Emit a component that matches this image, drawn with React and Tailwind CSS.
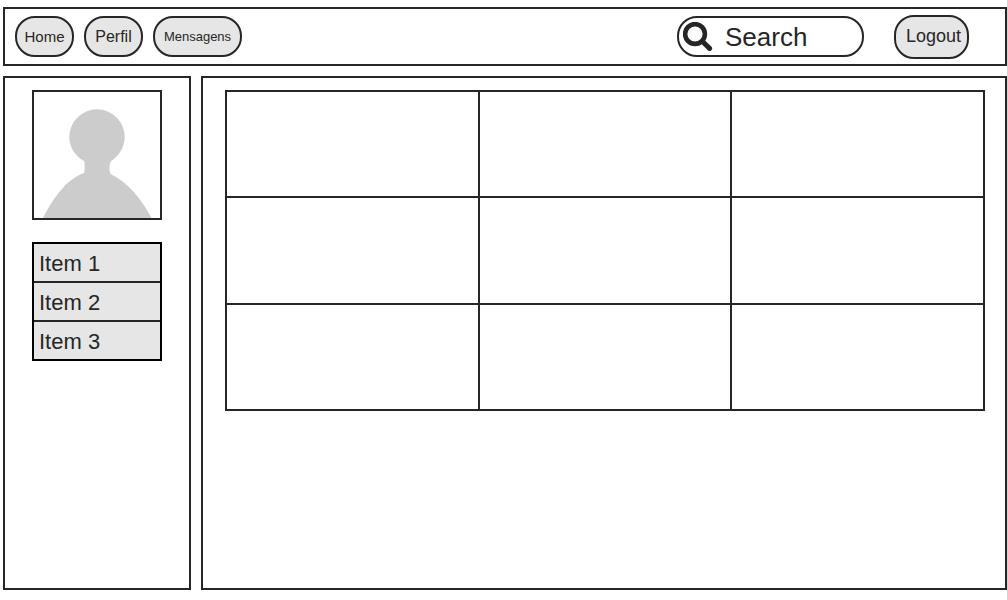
const navItems = [
  { label: "Home", className: "w-[59px] text-[15px]" },
  { label: "Perfil", className: "w-[59px] text-base" },
  { label: "Mensagens", className: "w-[89px] text-[13px]" },
];

const items = ["Item 1", "Item 2", "Item 3"];
const rowHeights = ["h-[106px]", "h-[107px]", "h-[106px]"];

function SearchIcon() {
  return (
    <svg viewBox="0 0 30 30" className="size-[30px] shrink-0" fill="none" stroke="#262626" aria-hidden="true">
      <circle cx="12" cy="12" r="9.9" strokeWidth="4.6" />
      <path d="M18.500 18.500 L21 21" strokeWidth="4.4" />
      <path d="M20.500 20.500 L26.600 26.400" strokeWidth="5" strokeLinecap="round" />
    </svg>
  );
}

function Avatar() {
  return (
    <svg viewBox="0 0 126 126" className="block w-full" role="img" aria-label="Avatar">
      <path
        fill="#cccccc"
        d="M9 126 C19 107 32 87 50 81 C51 77 51 73 50 69 C41 64 35.3 55 35.3 45 A27.7 27.7 0 0 1 90.7 45 C90.7 55 85 64 77 69 C75 73 75 77 76.500 82 C94 90 108 108 117.500 126 Z"
      />
    </svg>
  );
}

export default function App() {
  return (
    <div className="flex min-h-screen flex-col gap-[10px] bg-white pt-[7px] pb-[10px] pl-[3px] font-['Liberation_Sans',Arial,sans-serif] text-[#262626]">
      <header className="flex h-[59px] items-center justify-between border-2 border-[#262626] pr-9 pl-[10px]">
        <nav className="flex gap-[10px]">
          {navItems.map(({ label, className }) => (
            <button
              key={label}
              type="button"
              className={`h-[41px] rounded-[20px] border-2 border-[#262626] bg-[#e6e6e6] leading-6 ${className}`}
            >
              {label}
            </button>
          ))}
        </nav>
        <div className="flex items-center gap-[30px]">
          <label className="flex h-[41px] w-[187px] items-center gap-3 rounded-[20px] border-2 border-[#262626] bg-white pr-4 pl-1">
            <SearchIcon />
            <input
              type="text"
              aria-label="Search"
              placeholder="Search"
              className="w-full min-w-0 bg-transparent text-[26px] leading-8 outline-none placeholder:text-[#262626]"
            />
          </label>
          <button
            type="button"
            className="h-11 w-[75px] rounded-[20px] border-2 border-[#262626] bg-[#e6e6e6] pb-0.5 pl-1 text-lg"
          >
            Logout
          </button>
        </div>
      </header>

      <div className="flex grow gap-[10px]">
        <aside className="flex w-[188px] shrink-0 flex-col gap-[22px] border-2 border-[#262626] px-[27px] pt-3">
          <div className="w-[130px] border-2 border-[#262626]">
            <Avatar />
          </div>
          <ul className="w-[130px] divide-y-2 divide-[#262626] border-2 border-black bg-[#e6e6e6] text-[22px]">
            {items.map((item) => (
              <li key={item} className="box-content flex h-[36px] items-center pt-px pl-[5px]">
                {item}
              </li>
            ))}
          </ul>
        </aside>

        <main className="grow border-2 border-[#262626] pt-3 pr-5 pb-5 pl-[22px]">
          <table className="w-full table-fixed border-collapse border-2 border-[#262626]">
            <tbody>
              {rowHeights.map((height, row) => (
                <tr key={row} className={height}>
                  <td className="border-2 border-[#262626]" />
                  <td className="border-2 border-[#262626]" />
                  <td className="border-2 border-[#262626]" />
                </tr>
              ))}
            </tbody>
          </table>
        </main>
      </div>
    </div>
  );
}
